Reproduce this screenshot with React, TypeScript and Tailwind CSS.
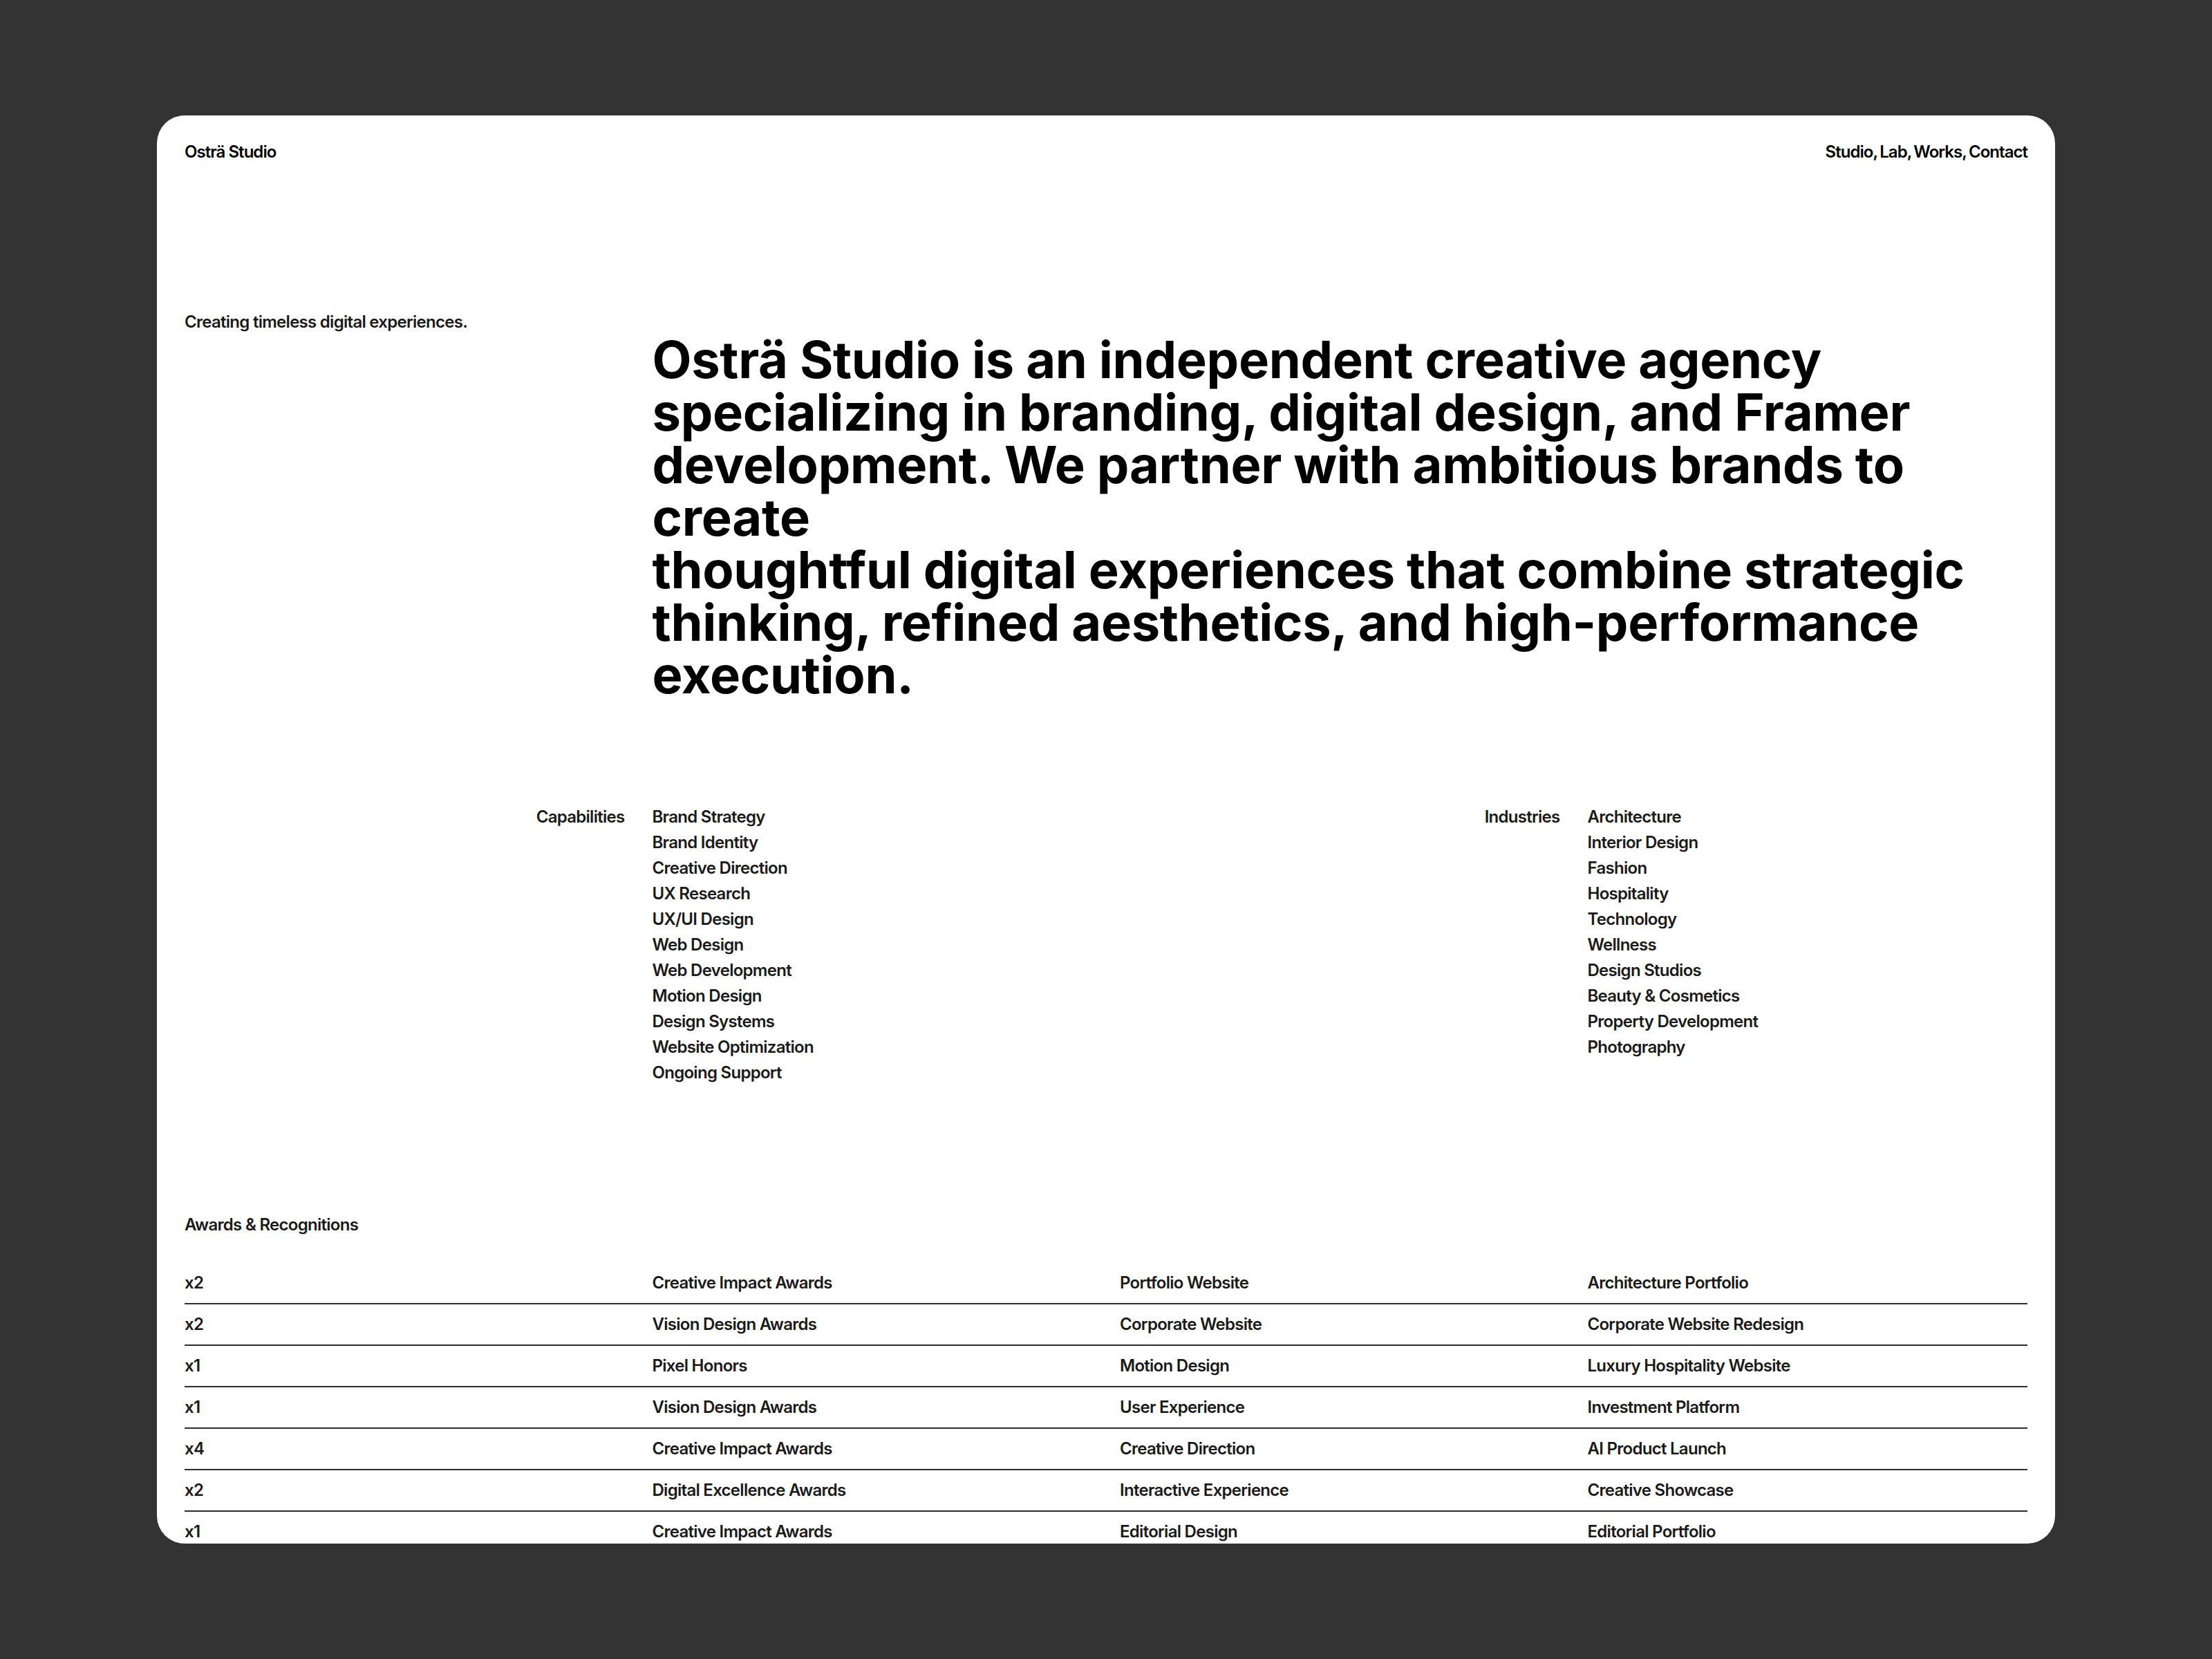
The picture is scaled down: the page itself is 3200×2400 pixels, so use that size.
import React from "react";

const capabilities = [
  "Brand Strategy",
  "Brand Identity",
  "Creative Direction",
  "UX Research",
  "UX/UI Design",
  "Web Design",
  "Web Development",
  "Motion Design",
  "Design Systems",
  "Website Optimization",
  "Ongoing Support",
];

const industries = [
  "Architecture",
  "Interior Design",
  "Fashion",
  "Hospitality",
  "Technology",
  "Wellness",
  "Design Studios",
  "Beauty & Cosmetics",
  "Property Development",
  "Photography",
];

const awards = [
  ["x2", "Creative Impact Awards", "Portfolio Website", "Architecture Portfolio"],
  ["x2", "Vision Design Awards", "Corporate Website", "Corporate Website Redesign"],
  ["x1", "Pixel Honors", "Motion Design", "Luxury Hospitality Website"],
  ["x1", "Vision Design Awards", "User Experience", "Investment Platform"],
  ["x4", "Creative Impact Awards", "Creative Direction", "AI Product Launch"],
  ["x2", "Digital Excellence Awards", "Interactive Experience", "Creative Showcase"],
  ["x1", "Creative Impact Awards", "Editorial Design", "Editorial Portfolio"],
];

const nav = ["Studio", "Lab", "Works", "Contact"];

export default function App() {
  return (
    <div
      className="flex h-[2400px] w-[3200px] items-center justify-center bg-[#333333]"
      style={{ fontFamily: "Inter, 'Noto Sans', sans-serif" }}
    >
      <div className="h-[2066px] w-[2746px] overflow-hidden rounded-[40px] bg-white px-[40px] pt-[38px] text-[#1a1a1a]">
        {/* Header */}
        <header className="flex items-center justify-between text-[24px] font-semibold leading-[30px] tracking-[-0.04em] text-black">
          <span>Osträ Studio</span>
          <nav className="flex gap-[3px]">
            {nav.map((n, i) => (
              <a key={n} href="#">
                {n}
                {i < nav.length - 1 ? "," : ""}
              </a>
            ))}
          </nav>
        </header>

        {/* Intro */}
        <section className="mt-[217px] grid grid-cols-4 gap-x-[40px]">
          <p className="text-[24px] font-semibold leading-[28px] tracking-[-0.03em]">
            Creating timeless digital experiences.
          </p>
          <h1 className="col-span-3 mt-[30px] text-[74px] font-bold leading-[76px] tracking-[-0.004em] text-black">
            Osträ Studio is an independent creative agency specializing in
            branding, digital design, and Framer development. We partner with
            ambitious brands to create
            <br />
            thoughtful digital experiences that combine strategic thinking,
            refined aesthetics, and high-performance execution.
          </h1>
        </section>

        {/* Capabilities / Industries */}
        <section className="mt-[149px] grid grid-cols-4 gap-x-[40px] text-[24px] font-semibold leading-[37px] tracking-[-0.03em]">
          <div className="text-right">Capabilities</div>
          <ul>
            {capabilities.map((c) => (
              <li key={c}>{c}</li>
            ))}
          </ul>
          <div className="text-right">Industries</div>
          <ul>
            {industries.map((c) => (
              <li key={c}>{c}</li>
            ))}
          </ul>
        </section>

        {/* Awards */}
        <section className="mt-[188px]">
          <h2 className="text-[24px] font-semibold leading-[28px] tracking-[-0.03em]">
            Awards &amp; Recognitions
          </h2>
          <div className="mt-[41px]">
            {awards.map((row, i) => (
              <div
                key={i}
                className="grid h-[60px] grid-cols-4 items-center gap-x-[40px] border-b-2 border-[#2e2e2e] text-[24px] font-semibold tracking-[-0.03em]"
              >
                {row.map((cell, j) => (
                  <span key={j}>{cell}</span>
                ))}
              </div>
            ))}
          </div>
        </section>
      </div>
    </div>
  );
}
